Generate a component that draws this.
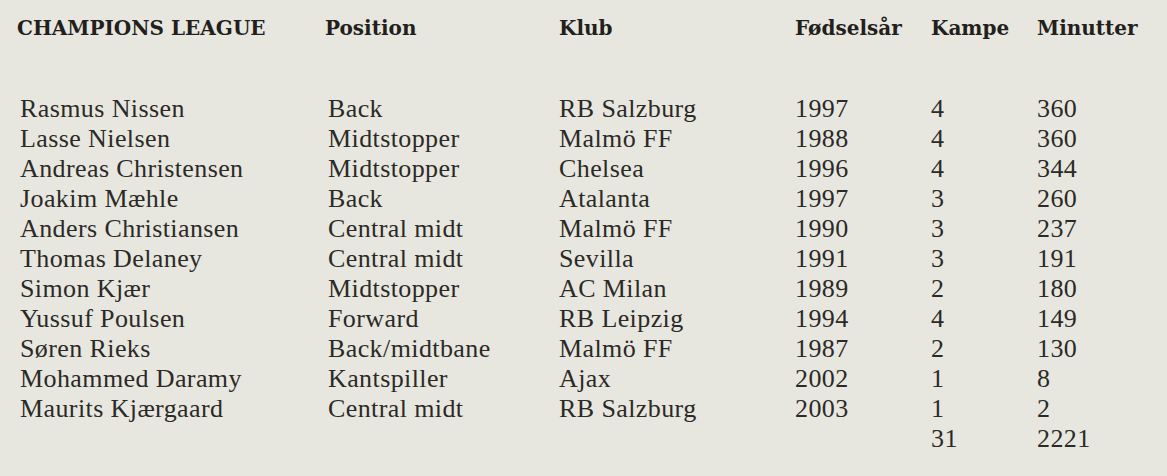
import React from 'react';

// Spillere – Champions League
const rows = [
    ['Rasmus Nissen', 'Back', 'RB Salzburg', '1997', '4', '360'],
    ['Lasse Nielsen', 'Midtstopper', 'Malmö FF', '1988', '4', '360'],
    ['Andreas Christensen', 'Midtstopper', 'Chelsea', '1996', '4', '344'],
    ['Joakim Mæhle', 'Back', 'Atalanta', '1997', '3', '260'],
    ['Anders Christiansen', 'Central midt', 'Malmö FF', '1990', '3', '237'],
    ['Thomas Delaney', 'Central midt', 'Sevilla', '1991', '3', '191'],
    ['Simon Kjær', 'Midtstopper', 'AC Milan', '1989', '2', '180'],
    ['Yussuf Poulsen', 'Forward', 'RB Leipzig', '1994', '4', '149'],
    ['Søren Rieks', 'Back/midtbane', 'Malmö FF', '1987', '2', '130'],
    ['Mohammed Daramy', 'Kantspiller', 'Ajax', '2002', '1', '8'],
    ['Maurits Kjærgaard', 'Central midt', 'RB Salzburg', '2003', '1', '2'],
    ['', '', '', '', '31', '2221'],
];

const headers = ['CHAMPIONS LEAGUE', 'Position', 'Klub', 'Fødselsår', 'Kampe', 'Minutter'];

const cols = 'grid grid-cols-[308px_231px_236px_136px_106px_1fr]';

export default function App() {
    return (
        <div className="w-[1167px] h-[476px] bg-[#e8e7df] pl-[20px] pt-[13px] overflow-hidden">
            {/* Overskrifter */}
            <div className={`${cols} h-[30px] leading-[30px] text-[20px] font-bold text-[#221f1c] font-['DejaVu_Serif',serif]`}>
                {headers.map((h, i) => (
                    <div key={i} className={i < 2 ? '-ml-[3px]' : ''}>
                        {h}
                    </div>
                ))}
            </div>

            {/* Rækker */}
            <div className="mt-[51px] text-[26px] tracking-[0.4px] text-[#2b2a27] font-['Liberation_Serif',serif]">
                {rows.map((r, i) => (
                    <div key={i} className={`${cols} h-[30px] leading-[30px]`}>
                        {r.map((c, j) => (
                            <div key={j}>{c}</div>
                        ))}
                    </div>
                ))}
            </div>
        </div>
    );
}
